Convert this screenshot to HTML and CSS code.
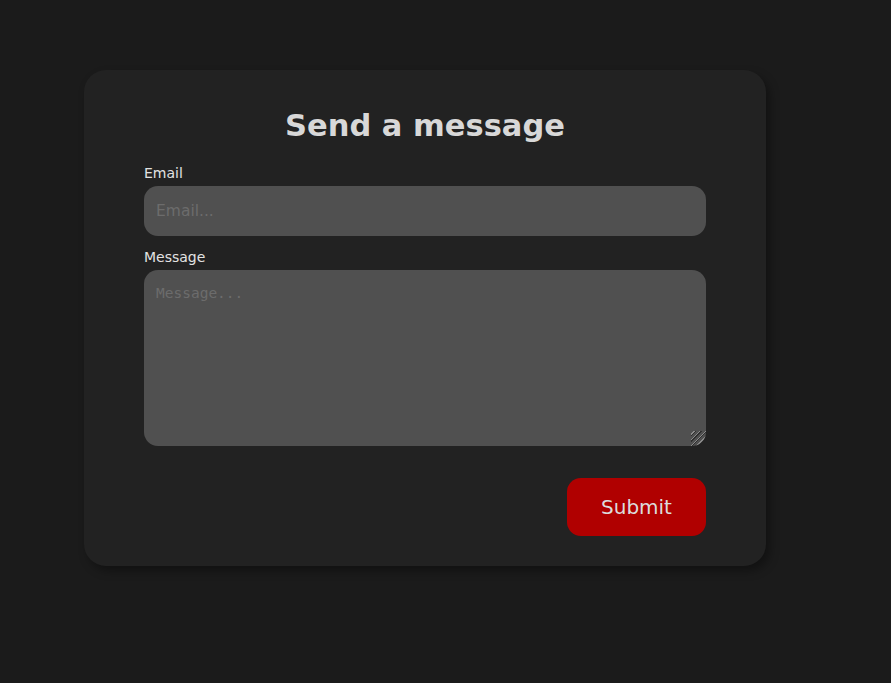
FILE: index.html
```html
<!DOCTYPE html>
<html lang="en">
<head>
<meta charset="utf-8">
<title>Send a message</title>
<link rel="stylesheet" href="styles.css">
</head>
<body>
<main class="page">
  <form class="card">
    <h1 class="title">Send a message</h1>
    <label class="label" for="email">Email</label>
    <input class="input" id="email" type="email" placeholder="Email...">
    <label class="label label-msg" for="message">Message</label>
    <textarea class="textarea" id="message" placeholder="Message..."></textarea>
    <div class="actions">
      <button class="submit" type="button">Submit</button>
    </div>
  </form>
</main>
</body>
</html>
```

FILE: styles.css
```css
html, body {
  margin: 0;
  padding: 0;
  background: #1b1b1b;
  height: 100%;
}
.page {
  padding: 70px 0 0 84px;
}
.card {
  box-sizing: border-box;
  width: 682px;
  height: 496px;
  background: #222222;
  border-radius: 22px;
  box-shadow: 4px 5px 10px rgba(0, 0, 0, 0.35);
  padding: 0 60px;
  display: flex;
  flex-direction: column;
  font-family: "DejaVu Sans", sans-serif;
}
.title {
  margin: 0;
  padding-top: 36px;
  height: 50px;
  line-height: 40px;
  text-align: center;
  font-size: 30.5px;
  font-weight: bold;
  color: #d8d8d8;
}
.label {
  display: block;
  font-size: 14px;
  line-height: 16px;
  color: #e2e2e2;
  margin-top: 9px;
  margin-bottom: 5px;
}
.label-msg {
  margin-top: 13px;
}
.input, .textarea {
  display: block;
  box-sizing: border-box;
  width: 100%;
  border: none;
  outline: none;
  background: #505050;
  color: #e0e0e0;
  border-radius: 14px;
  padding: 0 12px;
}
.input {
  height: 50px;
  font-family: "DejaVu Sans", sans-serif;
  font-size: 15.5px;
}
.textarea {
  height: 176px;
  padding-top: 15px;
  resize: vertical;
  font-family: "DejaVu Sans Mono", monospace;
  font-size: 14.5px;
}
.textarea::-webkit-resizer {
  background: repeating-linear-gradient(135deg, transparent 0 2px, #8a8a8a 2px 3px, #2e2e2e 3px 4px);
  border-bottom-right-radius: 14px;
}
.input::placeholder, .textarea::placeholder {
  color: #6c6c6c;
}
.actions {
  display: flex;
  justify-content: flex-end;
  margin-top: 32px;
}
.submit {
  width: 139px;
  height: 58px;
  border: none;
  border-radius: 14px;
  background: #b00000;
  color: #dcdcdc;
  font-family: "DejaVu Sans", sans-serif;
  font-size: 20px;
  cursor: pointer;
}
```
